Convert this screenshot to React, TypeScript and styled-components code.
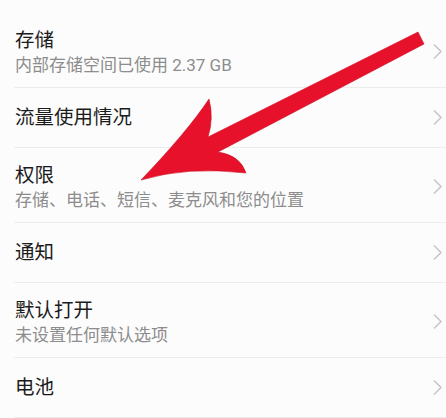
import React from 'react';
import styled, { createGlobalStyle } from 'styled-components';

const GlobalStyle = createGlobalStyle`
  html, body {
    margin: 0;
    padding: 0;
    background: #fcfcfc;
  }
  body {
    font-family: Roboto, "Noto Sans CJK SC", sans-serif;
    -webkit-font-smoothing: antialiased;
  }
`

const Screen = styled.div`
  position: relative;
  width: 446px;
  height: 418px;
  overflow: hidden;
  background: #fcfcfc;
`

const List = styled.ul`
  list-style: none;
  margin: 0;
  padding: 13px 0 0;
`

const Row = styled.li<{ $tall?: boolean }>`
  display: flex;
  align-items: center;
  box-sizing: border-box;
  height: ${p => (p.$tall ? '75px' : '60px')};
  margin-left: 14px;
  padding: ${p => (p.$tall ? '3px 3px 0 1px' : '0 3px 0 1px')};
  border-bottom: 1px solid #ececec;
`

const TextBlock = styled.div`
  flex: 1;
  display: flex;
  flex-direction: column;
  min-width: 0;
`

const Title = styled.span`
  font-size: 19.5px;
  line-height: 26px;
  color: #1b1b1b;
`

const Subtitle = styled.span`
  font-size: 17px;
  line-height: 22px;
  color: #8d8d8d;
  white-space: nowrap;
`

const Overlay = styled.svg`
  position: absolute;
  left: 0;
  top: 0;
  pointer-events: none;
`

const Chevron = () => (
  <svg width="11" height="17" viewBox="0 0 11 17">
    <polyline points="2,1.5 9,8.5 2,15.5" fill="none" stroke="#c8c8c8" strokeWidth="1.6" />
  </svg>
)

type Item = { title: string; sub?: string };

const items: Item[] = [
  { title: '存储', sub: '内部存储空间已使用 2.37 GB' },
  { title: '流量使用情况' },
  { title: '权限', sub: '存储、电话、短信、麦克风和您的位置' },
  { title: '通知' },
  { title: '默认打开', sub: '未设置任何默认选项' },
  { title: '电池' },
];

export default function App() {
  return (
    <Screen>
      <GlobalStyle />
      <List>
        {items.map(item => (
          <Row key={item.title} $tall={!!item.sub}>
            <TextBlock>
              <Title>{item.title}</Title>
              {item.sub && <Subtitle>{item.sub}</Subtitle>}
            </TextBlock>
            <Chevron />
          </Row>
        ))}
      </List>

      {/* red pointer laid over the list */}
      <Overlay width="446" height="418" viewBox="0 0 446 418">
        <path
          d="M 418 32 L 424 44 L 218 152 Q 240 155 246 173 Q 187 166 141 180 Q 187 132 209 99 Q 214 118 208 137 Z"
          fill="#e8112b"
          stroke="#c90d22"
          strokeWidth="0.6"
          strokeLinejoin="miter"
        />
      </Overlay>
    </Screen>
  )
}
